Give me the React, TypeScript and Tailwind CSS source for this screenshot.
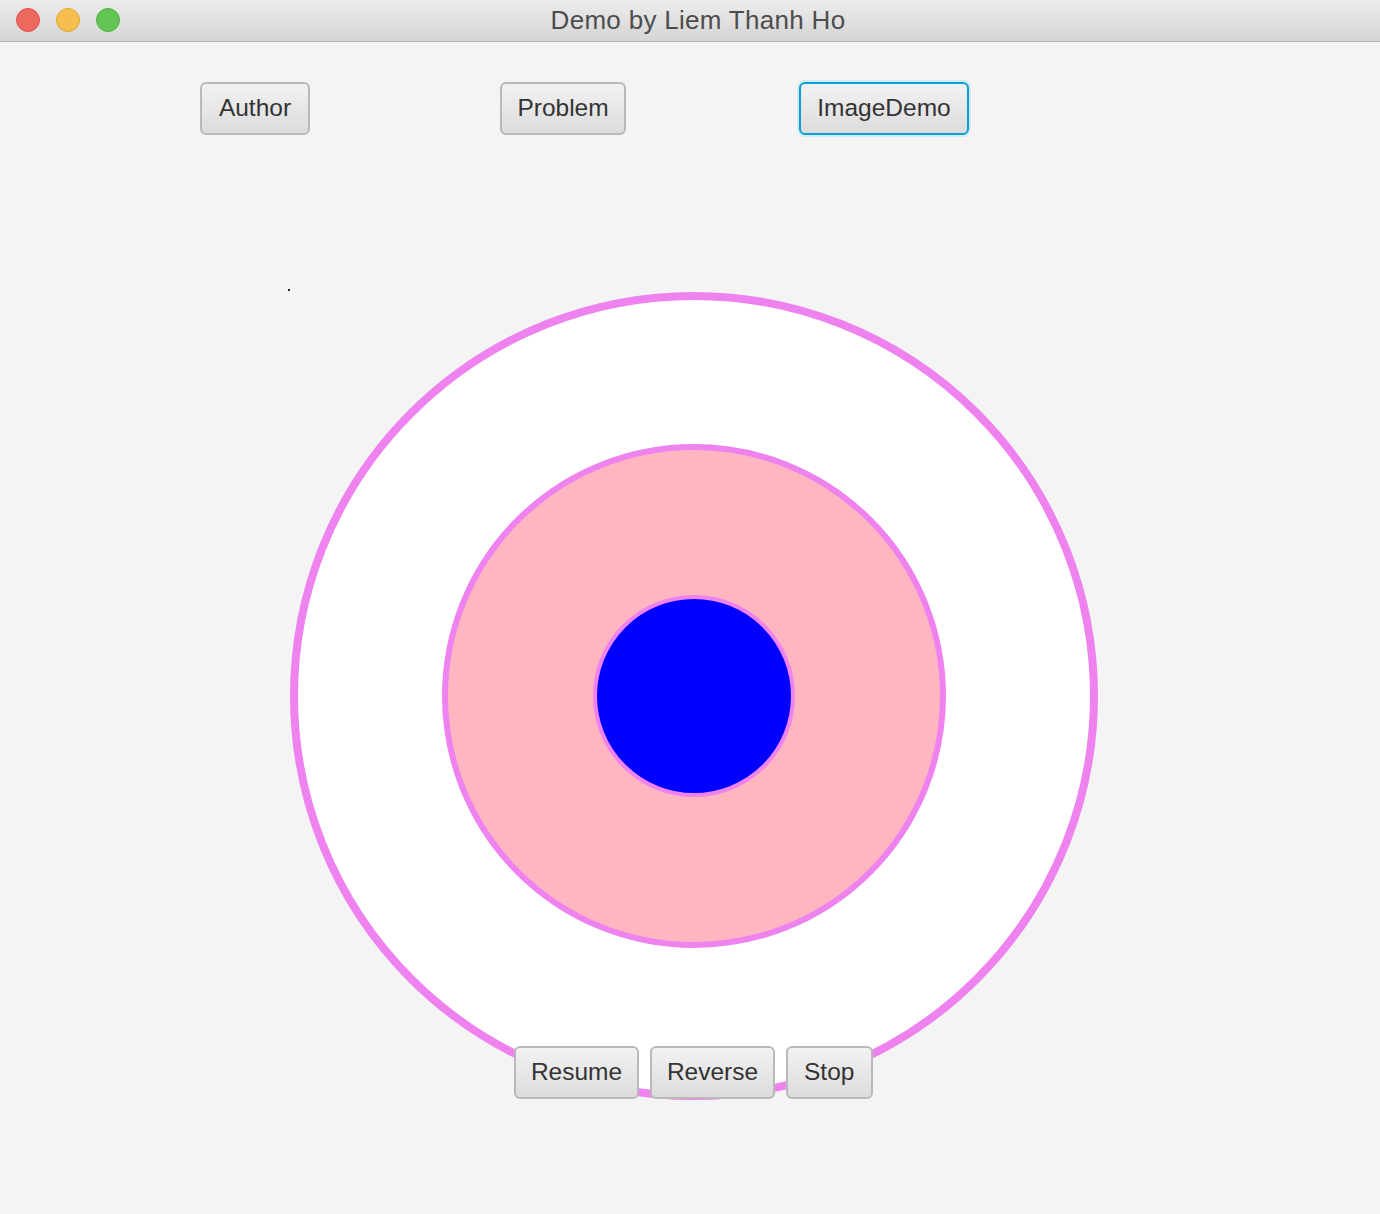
import React from 'react';

const font = { fontFamily: '"Liberation Sans", Arial, sans-serif' };

function FxButton({
  label,
  width,
  focused = false,
}: {
  label: string;
  width: number;
  focused?: boolean;
}) {
  return (
    <div
      className={`flex h-[53px] shrink-0 items-center justify-center overflow-hidden rounded-[6px] bg-gradient-to-b from-[#f2f2f2] to-[#dcdcdc] text-[24.5px] leading-none text-[#333333] ${
        focused
          ? 'border-[2px] border-[#0a9fd6] shadow-[0_0_0_2px_#d3eaf4]'
          : 'border-[2px] border-[#b9b9b9]'
      }`}
      style={{ width }}
    >
      <span className="whitespace-nowrap">{label}</span>
    </div>
  );
}

export default function App() {
  return (
    <div className="min-h-[1214px] w-[1380px] bg-[#f4f4f4]" style={font}>
      {/* title bar */}
      <div className="relative flex h-[42px] items-center justify-center border-b border-[#b3b3b3] bg-gradient-to-b from-[#ececec] to-[#d5d5d5]">
        <div className="absolute left-[16px] top-[8px] flex gap-[16px]">
          <span className="h-[24px] w-[24px] rounded-full border border-[#e0514a] bg-[#ee6a5f]" />
          <span className="h-[24px] w-[24px] rounded-full border border-[#e0a630] bg-[#f6be4f]" />
          <span className="h-[24px] w-[24px] rounded-full border border-[#4fb23d] bg-[#62c554]" />
        </div>
        <span className="pl-[16px] text-[26px] tracking-[0.3px] text-[#4d4d4d]">Demo by Liem Thanh Ho</span>
      </div>

      {/* top buttons */}
      <div className="flex pl-[200px] pt-[40px]">
        <FxButton label="Author" width={110} />
        <div className="w-[190px]" />
        <FxButton label="Problem" width={126} />
        <div className="w-[173px]" />
        <FxButton label="ImageDemo" width={170} focused />
      </div>

      {/* canvas */}
      <div className="relative mt-[157px]">
        <span className="absolute left-[288px] top-[-3px] h-[2px] w-[2px] bg-[#222]" />
        <div className="flex pl-[290px]">
          <div className="flex h-[808px] w-[808px] items-center justify-center rounded-full border-[8px] border-[#ee82ee] bg-white">
            <div className="flex h-[504px] w-[504px] items-center justify-center rounded-full border-[6px] border-[#ee82ee] bg-[#ffb6c1]">
              <div className="h-[202px] w-[202px] rounded-full border-[4px] border-[#ee82ee] bg-[#0000ff]" />
            </div>
          </div>
        </div>

        <div className="relative -mt-[54px] flex gap-[11px] pl-[514px]">
          <FxButton label="Resume" width={125} />
          <FxButton label="Reverse" width={125} />
          <div className="flex h-[53px] w-[87px] items-center overflow-hidden rounded-[6px] border-[2px] border-[#b9b9b9] bg-gradient-to-b from-[#f2f2f2] to-[#dcdcdc] pl-[16px] text-[24.5px] leading-none text-[#333333]">
            <span className="block w-[54px] overflow-hidden whitespace-nowrap">Stop</span>
          </div>
        </div>
      </div>
    </div>
  );
}
